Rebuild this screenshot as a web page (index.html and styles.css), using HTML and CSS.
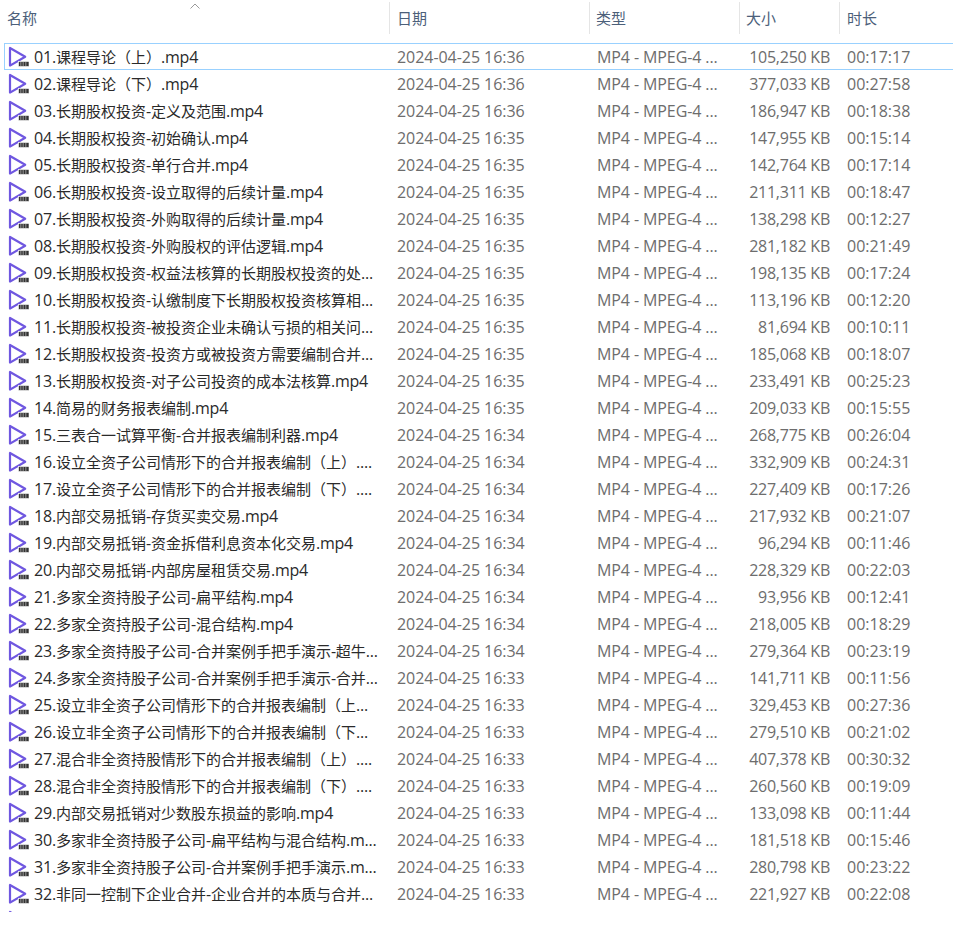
FILE: index.html
```html
<!DOCTYPE html>
<html lang="zh-CN">
<head>
<meta charset="utf-8">
<title>文件列表</title>
<link rel="stylesheet" href="styles.css">
</head>
<body>
<svg class="defs" width="0" height="0" aria-hidden="true">
  <symbol id="v" viewBox="0 0 22 22">
    <path class="tri" d="M2 2V19.600L17.200 10.800Z"/>
    <rect class="film" x="10.500" y="15.500" width="10.500" height="5"/>
    <path class="holes" d="M12 17h1.500M14.500 17h1.500M17 17h1.500M12 19h1.500M14.500 19h1.500M17 19h1.500"/>
  </symbol>
</svg>
<main class="explorer">
  <header class="head">
    <div class="hc hc-name">名称<svg class="sort" width="10" height="6" viewBox="0 0 10 6"><path d="M.5 5.500 5 1l4.500 4.500"/></svg></div>
    <div class="hc hc-date">日期</div>
    <div class="hc hc-type">类型</div>
    <div class="hc hc-size">大小</div>
    <div class="hc hc-dur">时长</div>
  </header>
  <div class="list">
    <div class="row sel"><div class="name"><svg class="ic"><use href="#v"/></svg><span><b>01.</b>课程导论（上）<b>.mp4</b></span></div><div class="date">2024-04-25 16:36</div><div class="type">MP4 - MPEG-4 ...</div><div class="size">105,250 KB</div><div class="dur">00:17:17</div></div>
    <div class="row"><div class="name"><svg class="ic"><use href="#v"/></svg><span><b>02.</b>课程导论（下）<b>.mp4</b></span></div><div class="date">2024-04-25 16:36</div><div class="type">MP4 - MPEG-4 ...</div><div class="size">377,033 KB</div><div class="dur">00:27:58</div></div>
    <div class="row"><div class="name"><svg class="ic"><use href="#v"/></svg><span><b>03.</b>长期股权投资<b>-</b>定义及范围<b>.mp4</b></span></div><div class="date">2024-04-25 16:36</div><div class="type">MP4 - MPEG-4 ...</div><div class="size">186,947 KB</div><div class="dur">00:18:38</div></div>
    <div class="row"><div class="name"><svg class="ic"><use href="#v"/></svg><span><b>04.</b>长期股权投资<b>-</b>初始确认<b>.mp4</b></span></div><div class="date">2024-04-25 16:35</div><div class="type">MP4 - MPEG-4 ...</div><div class="size">147,955 KB</div><div class="dur">00:15:14</div></div>
    <div class="row"><div class="name"><svg class="ic"><use href="#v"/></svg><span><b>05.</b>长期股权投资<b>-</b>单行合并<b>.mp4</b></span></div><div class="date">2024-04-25 16:35</div><div class="type">MP4 - MPEG-4 ...</div><div class="size">142,764 KB</div><div class="dur">00:17:14</div></div>
    <div class="row"><div class="name"><svg class="ic"><use href="#v"/></svg><span><b>06.</b>长期股权投资<b>-</b>设立取得的后续计量<b>.mp4</b></span></div><div class="date">2024-04-25 16:35</div><div class="type">MP4 - MPEG-4 ...</div><div class="size">211,311 KB</div><div class="dur">00:18:47</div></div>
    <div class="row"><div class="name"><svg class="ic"><use href="#v"/></svg><span><b>07.</b>长期股权投资<b>-</b>外购取得的后续计量<b>.mp4</b></span></div><div class="date">2024-04-25 16:35</div><div class="type">MP4 - MPEG-4 ...</div><div class="size">138,298 KB</div><div class="dur">00:12:27</div></div>
    <div class="row"><div class="name"><svg class="ic"><use href="#v"/></svg><span><b>08.</b>长期股权投资<b>-</b>外购股权的评估逻辑<b>.mp4</b></span></div><div class="date">2024-04-25 16:35</div><div class="type">MP4 - MPEG-4 ...</div><div class="size">281,182 KB</div><div class="dur">00:21:49</div></div>
    <div class="row"><div class="name"><svg class="ic"><use href="#v"/></svg><span><b>09.</b>长期股权投资<b>-</b>权益法核算的长期股权投资的处<b>...</b></span></div><div class="date">2024-04-25 16:35</div><div class="type">MP4 - MPEG-4 ...</div><div class="size">198,135 KB</div><div class="dur">00:17:24</div></div>
    <div class="row"><div class="name"><svg class="ic"><use href="#v"/></svg><span><b>10.</b>长期股权投资<b>-</b>认缴制度下长期股权投资核算相<b>...</b></span></div><div class="date">2024-04-25 16:35</div><div class="type">MP4 - MPEG-4 ...</div><div class="size">113,196 KB</div><div class="dur">00:12:20</div></div>
    <div class="row"><div class="name"><svg class="ic"><use href="#v"/></svg><span><b>11.</b>长期股权投资<b>-</b>被投资企业未确认亏损的相关问<b>...</b></span></div><div class="date">2024-04-25 16:35</div><div class="type">MP4 - MPEG-4 ...</div><div class="size">81,694 KB</div><div class="dur">00:10:11</div></div>
    <div class="row"><div class="name"><svg class="ic"><use href="#v"/></svg><span><b>12.</b>长期股权投资<b>-</b>投资方或被投资方需要编制合并<b>...</b></span></div><div class="date">2024-04-25 16:35</div><div class="type">MP4 - MPEG-4 ...</div><div class="size">185,068 KB</div><div class="dur">00:18:07</div></div>
    <div class="row"><div class="name"><svg class="ic"><use href="#v"/></svg><span><b>13.</b>长期股权投资<b>-</b>对子公司投资的成本法核算<b>.mp4</b></span></div><div class="date">2024-04-25 16:35</div><div class="type">MP4 - MPEG-4 ...</div><div class="size">233,491 KB</div><div class="dur">00:25:23</div></div>
    <div class="row"><div class="name"><svg class="ic"><use href="#v"/></svg><span><b>14.</b>简易的财务报表编制<b>.mp4</b></span></div><div class="date">2024-04-25 16:35</div><div class="type">MP4 - MPEG-4 ...</div><div class="size">209,033 KB</div><div class="dur">00:15:55</div></div>
    <div class="row"><div class="name"><svg class="ic"><use href="#v"/></svg><span><b>15.</b>三表合一试算平衡<b>-</b>合并报表编制利器<b>.mp4</b></span></div><div class="date">2024-04-25 16:34</div><div class="type">MP4 - MPEG-4 ...</div><div class="size">268,775 KB</div><div class="dur">00:26:04</div></div>
    <div class="row"><div class="name"><svg class="ic"><use href="#v"/></svg><span><b>16.</b>设立全资子公司情形下的合并报表编制（上）<b>....</b></span></div><div class="date">2024-04-25 16:34</div><div class="type">MP4 - MPEG-4 ...</div><div class="size">332,909 KB</div><div class="dur">00:24:31</div></div>
    <div class="row"><div class="name"><svg class="ic"><use href="#v"/></svg><span><b>17.</b>设立全资子公司情形下的合并报表编制（下）<b>....</b></span></div><div class="date">2024-04-25 16:34</div><div class="type">MP4 - MPEG-4 ...</div><div class="size">227,409 KB</div><div class="dur">00:17:26</div></div>
    <div class="row"><div class="name"><svg class="ic"><use href="#v"/></svg><span><b>18.</b>内部交易抵销<b>-</b>存货买卖交易<b>.mp4</b></span></div><div class="date">2024-04-25 16:34</div><div class="type">MP4 - MPEG-4 ...</div><div class="size">217,932 KB</div><div class="dur">00:21:07</div></div>
    <div class="row"><div class="name"><svg class="ic"><use href="#v"/></svg><span><b>19.</b>内部交易抵销<b>-</b>资金拆借利息资本化交易<b>.mp4</b></span></div><div class="date">2024-04-25 16:34</div><div class="type">MP4 - MPEG-4 ...</div><div class="size">96,294 KB</div><div class="dur">00:11:46</div></div>
    <div class="row"><div class="name"><svg class="ic"><use href="#v"/></svg><span><b>20.</b>内部交易抵销<b>-</b>内部房屋租赁交易<b>.mp4</b></span></div><div class="date">2024-04-25 16:34</div><div class="type">MP4 - MPEG-4 ...</div><div class="size">228,329 KB</div><div class="dur">00:22:03</div></div>
    <div class="row"><div class="name"><svg class="ic"><use href="#v"/></svg><span><b>21.</b>多家全资持股子公司<b>-</b>扁平结构<b>.mp4</b></span></div><div class="date">2024-04-25 16:34</div><div class="type">MP4 - MPEG-4 ...</div><div class="size">93,956 KB</div><div class="dur">00:12:41</div></div>
    <div class="row"><div class="name"><svg class="ic"><use href="#v"/></svg><span><b>22.</b>多家全资持股子公司<b>-</b>混合结构<b>.mp4</b></span></div><div class="date">2024-04-25 16:34</div><div class="type">MP4 - MPEG-4 ...</div><div class="size">218,005 KB</div><div class="dur">00:18:29</div></div>
    <div class="row"><div class="name"><svg class="ic"><use href="#v"/></svg><span><b>23.</b>多家全资持股子公司<b>-</b>合并案例手把手演示<b>-</b>超牛<b>...</b></span></div><div class="date">2024-04-25 16:34</div><div class="type">MP4 - MPEG-4 ...</div><div class="size">279,364 KB</div><div class="dur">00:23:19</div></div>
    <div class="row"><div class="name"><svg class="ic"><use href="#v"/></svg><span><b>24.</b>多家全资持股子公司<b>-</b>合并案例手把手演示<b>-</b>合并<b>...</b></span></div><div class="date">2024-04-25 16:33</div><div class="type">MP4 - MPEG-4 ...</div><div class="size">141,711 KB</div><div class="dur">00:11:56</div></div>
    <div class="row"><div class="name"><svg class="ic"><use href="#v"/></svg><span><b>25.</b>设立非全资子公司情形下的合并报表编制（上<b>...</b></span></div><div class="date">2024-04-25 16:33</div><div class="type">MP4 - MPEG-4 ...</div><div class="size">329,453 KB</div><div class="dur">00:27:36</div></div>
    <div class="row"><div class="name"><svg class="ic"><use href="#v"/></svg><span><b>26.</b>设立非全资子公司情形下的合并报表编制（下<b>...</b></span></div><div class="date">2024-04-25 16:33</div><div class="type">MP4 - MPEG-4 ...</div><div class="size">279,510 KB</div><div class="dur">00:21:02</div></div>
    <div class="row"><div class="name"><svg class="ic"><use href="#v"/></svg><span><b>27.</b>混合非全资持股情形下的合并报表编制（上）<b>....</b></span></div><div class="date">2024-04-25 16:33</div><div class="type">MP4 - MPEG-4 ...</div><div class="size">407,378 KB</div><div class="dur">00:30:32</div></div>
    <div class="row"><div class="name"><svg class="ic"><use href="#v"/></svg><span><b>28.</b>混合非全资持股情形下的合并报表编制（下）<b>....</b></span></div><div class="date">2024-04-25 16:33</div><div class="type">MP4 - MPEG-4 ...</div><div class="size">260,560 KB</div><div class="dur">00:19:09</div></div>
    <div class="row"><div class="name"><svg class="ic"><use href="#v"/></svg><span><b>29.</b>内部交易抵销对少数股东损益的影响<b>.mp4</b></span></div><div class="date">2024-04-25 16:33</div><div class="type">MP4 - MPEG-4 ...</div><div class="size">133,098 KB</div><div class="dur">00:11:44</div></div>
    <div class="row"><div class="name"><svg class="ic"><use href="#v"/></svg><span><b>30.</b>多家非全资持股子公司<b>-</b>扁平结构与混合结构<b>.m...</b></span></div><div class="date">2024-04-25 16:33</div><div class="type">MP4 - MPEG-4 ...</div><div class="size">181,518 KB</div><div class="dur">00:15:46</div></div>
    <div class="row"><div class="name"><svg class="ic"><use href="#v"/></svg><span><b>31.</b>多家非全资持股子公司<b>-</b>合并案例手把手演示<b>.m...</b></span></div><div class="date">2024-04-25 16:33</div><div class="type">MP4 - MPEG-4 ...</div><div class="size">280,798 KB</div><div class="dur">00:23:22</div></div>
    <div class="row"><div class="name"><svg class="ic"><use href="#v"/></svg><span><b>32.</b>非同一控制下企业合并<b>-</b>企业合并的本质与合并<b>...</b></span></div><div class="date">2024-04-25 16:33</div><div class="type">MP4 - MPEG-4 ...</div><div class="size">221,927 KB</div><div class="dur">00:22:08</div></div>
    <div class="row"><div class="name"><svg class="ic"><use href="#v"/></svg></div></div>
  </div>
</main>
</body>
</html>
```
FILE: styles.css
```css
html, body {
  margin: 0;
  padding: 0;
  background: #fff;
}
body {
  width: 953px;
  height: 927px;
  overflow: hidden;
  font-family: "Open Sans", "Noto Sans CJK SC", sans-serif;
  font-size: 15px;
}
.defs {
  position: absolute;
}
.tri {
  fill: none;
  stroke: #6f57e0;
  stroke-width: 2.2;
  stroke-linejoin: round;
}
.film {
  fill: #333;
  stroke: #fff;
  stroke-width: .6;
}
.holes {
  stroke: #bbb;
  stroke-width: 1;
  fill: none;
}
.head {
  display: grid;
  grid-template-columns: 389px 200px 150px 100px 114px;
  height: 36px;
  padding-top: 2px;
  box-sizing: border-box;
  margin-bottom: 7px;
  color: #4c607a;
}
.hc {
  height: 32px;
  line-height: 32px;
  border-left: 1px solid #e5e5e5;
  padding-left: 7px;
  position: relative;
}
.hc-name {
  border-left: 0;
  padding-left: 7px;
}
.hc-type,
.hc-size {
  padding-left: 6px;
}
.sort {
  position: absolute;
  left: 190px;
  top: 1px;
}
.sort path {
  fill: none;
  stroke: #999;
  stroke-width: 1;
}
.list {
  height: 869px;
  overflow: hidden;
  margin-left: 4px;
}
.row {
  display: grid;
  grid-template-columns: 385px 200px 150px 100px 120px;
  width: 955px;
  height: 27px;
  line-height: 28px;
  box-sizing: border-box;
  color: #6d6d6d;
  font-size: 16px;
  white-space: nowrap;
}
.sel {
  box-shadow: inset 0 0 0 1px #99d1ff;
}
.name {
  display: flex;
  align-items: center;
  color: #2a2a2a;
  font-size: 15px;
  overflow: hidden;
  padding-left: 4px;
}
.name b {
  font-weight: 400;
  font-size: 16px;
  letter-spacing: -.2px;
}
.ic {
  width: 22px;
  height: 22px;
  flex: none;
  margin-right: 4px;
}
.date {
  padding-left: 8px;
  letter-spacing: -.05px;
}
.type {
  padding-left: 8px;
  letter-spacing: -.1px;
}
.size {
  text-align: right;
  padding-right: 9px;
  letter-spacing: -.25px;
}
.dur {
  padding-left: 8px;
}
```
